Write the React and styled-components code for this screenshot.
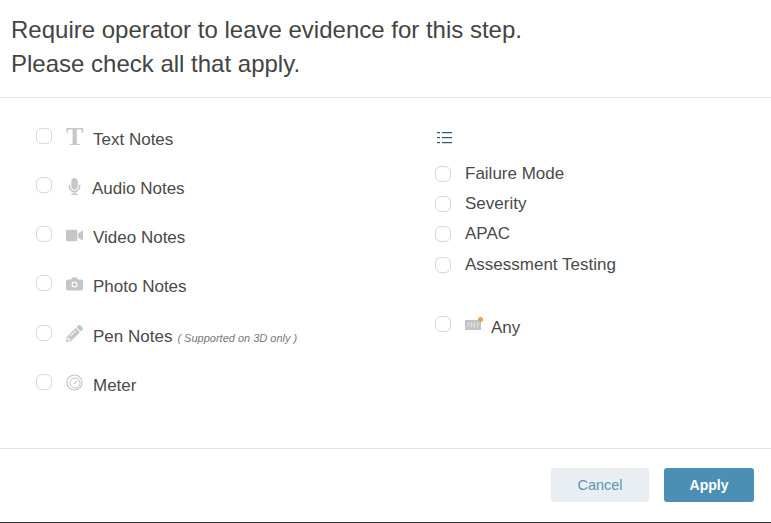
import React from "react";
import styled, { createGlobalStyle } from "styled-components";
import { FaMicrophone, FaVideo, FaPencilAlt } from "react-icons/fa";

const GlobalStyle = createGlobalStyle`
  html, body {
    margin: 0;
    padding: 0;
    background: #fff;
  }
  body {
    font-family: "Liberation Sans", Arial, sans-serif;
    color: #444;
  }
`;

function ListIcon() {
  return (
    <svg width="15" height="13" viewBox="0 0 15 13">
      <g fill="#2f5573">
        <rect x="0" y="1" width="3" height="1.2" />
        <rect x="5" y="1" width="10" height="1.2" />
        <rect x="0" y="6" width="3" height="1.2" />
        <rect x="5" y="6" width="10" height="1.2" />
        <rect x="0" y="11" width="3" height="1.2" />
        <rect x="5" y="11" width="10" height="1.2" />
      </g>
    </svg>
  );
}

function CameraIcon() {
  return (
    <svg width="17" height="14" viewBox="0 0 17 14">
      <path
        d="M2 2.500h3l1-2h5l1 2h3a2 2 0 0 1 2 2v7a2 2 0 0 1-2 2H2a2 2 0 0 1-2-2v-7a2 2 0 0 1 2-2z"
        fill="#c6c6c6"
      />
      <circle cx="8.500" cy="7.500" r="3" fill="#fff" />
      <circle cx="8.500" cy="7.500" r="1.800" fill="#c6c6c6" />
    </svg>
  );
}

function MeterIcon() {
  return (
    <svg width="17" height="17" viewBox="0 0 17 17" fill="none" stroke="#c4c4c4">
      <circle cx="8.5" cy="8.5" r="7.5" strokeWidth="1.2" />
      <circle cx="9" cy="9" r="5" strokeWidth="1" />
      <path d="M8 10l3-3" strokeWidth="1" stroke="#aaa" />
    </svg>
  );
}

function AnyIcon() {
  return (
    <svg width="18" height="14" viewBox="0 0 18 14">
      <rect x="0" y="3" width="16" height="10" fill="#c2c2c2" />
      <path d="M2 10.5l1-5h1l1 5M6.5 10.5v-5l3 5v-5M11 5.5l1.5 2.500 1.500-2.500M12.500 8v2.500" fill="none" stroke="#eee" strokeWidth="0.7" />
      <circle cx="15.500" cy="2.500" r="2.500" fill="#f0a040" />
    </svg>
  );
}

const rightItems = ["Failure Mode", "Severity", "APAC", "Assessment Testing"];

export default function App() {
  const leftItems = [
    { label: "Text Notes", icon: <SerifT>T</SerifT> },
    { label: "Audio Notes", icon: <FaMicrophone size={17} />, tight: true },
    { label: "Video Notes", icon: <FaVideo size={17} /> },
    { label: "Photo Notes", icon: <CameraIcon /> },
    { label: "Pen Notes", icon: <FaPencilAlt size={17} />, note: "( Supported on 3D only )" },
    { label: "Meter", icon: <MeterIcon /> },
  ];

  return (
    <Dialog>
      <GlobalStyle />
      <Header>
        Require operator to leave evidence for this step.
        <br />
        Please check all that apply.
      </Header>
      <Body>
        <LeftColumn>
          {leftItems.map((item) => (
            <EvidenceRow key={item.label}>
              <Checkbox />
              <IconSlot $tight={item.tight}>{item.icon}</IconSlot>
              <Label>{item.label}</Label>
              {item.note && <Note>{item.note}</Note>}
            </EvidenceRow>
          ))}
        </LeftColumn>
        <RightColumn>
          <ListHead>
            <ListIcon />
          </ListHead>
          {rightItems.map((label) => (
            <ListRow key={label}>
              <Checkbox />
              <Label>{label}</Label>
            </ListRow>
          ))}
          <AnyRow>
            <Checkbox />
            <AnySlot>
              <AnyIcon />
            </AnySlot>
            <Label>Any</Label>
          </AnyRow>
        </RightColumn>
      </Body>
      <Footer>
        <CancelButton>Cancel</CancelButton>
        <ApplyButton>Apply</ApplyButton>
      </Footer>
    </Dialog>
  );
}

const Dialog = styled.div`
  width: 771px;
  height: 523px;
  box-sizing: border-box;
  display: flex;
  flex-direction: column;
  border-bottom: 1px solid #333;
  background: #fff;
  overflow: hidden;
`;

const Header = styled.div`
  height: 98px;
  box-sizing: border-box;
  padding: 13px 11px 0;
  border-bottom: 1px solid #e5e5e5;
  font-size: 24px;
  line-height: 34px;
  color: #444;
`;

const Body = styled.div`
  flex: 1;
  display: flex;
  padding-top: 30px;
  padding-left: 36px;
`;

const LeftColumn = styled.div`
  width: 399px;
  display: flex;
  flex-direction: column;
  gap: 27.15px;
`;

const RightColumn = styled.div`
  display: flex;
  flex-direction: column;
`;

const EvidenceRow = styled.div`
  display: flex;
  align-items: flex-start;
  height: 22px;
`;

const Checkbox = styled.span`
  flex: none;
  width: 14px;
  height: 14px;
  border: 1px solid #d8d8d8;
  border-radius: 6px;
  background: #fff;
`;

const IconSlot = styled.span`
  flex: none;
  width: ${(p) => (p.$tight ? "26px" : "27px")};
  margin-left: 14px;
  height: 18px;
  display: flex;
  align-items: center;
  color: #c6c6c6;
`;

const SerifT = styled.span`
  font-family: "Liberation Serif", serif;
  font-weight: bold;
  font-size: 26px;
  line-height: 18px;
  color: #c6c6c6;
`;

const Label = styled.span`
  margin-top: 1px;
  font-size: 17px;
  line-height: 22px;
  color: #4a4a4a;
`;

const Note = styled.span`
  margin-left: 5px;
  margin-top: 6px;
  font-size: 11px;
  line-height: 14px;
  font-style: italic;
  color: #777;
`;

const ListHead = styled.div`
  height: 20px;
  padding-top: 2px;
  margin-bottom: 12px;
  margin-left: 2px;
`;

const ListRow = styled.div`
  display: flex;
  align-items: flex-start;
  gap: 14px;
  height: 22px;
  margin-bottom: 8.2px;
  padding-top: 4px;
  box-sizing: border-box;
  & > span:last-child {
    margin-top: -3px;
  }
`;

const AnyRow = styled.div`
  display: flex;
  align-items: flex-start;
  margin-top: 33.4px;
`;

const AnySlot = styled.span`
  flex: none;
  width: 26px;
  margin-left: 14px;
  margin-top: 1px;
`;

const Footer = styled.div`
  height: 74px;
  box-sizing: border-box;
  border-top: 1px solid #e5e5e5;
  display: flex;
  justify-content: flex-end;
  align-items: flex-start;
  gap: 15px;
  padding: 19px 17px 0 0;
`;

const CancelButton = styled.button`
  width: 98px;
  height: 34px;
  border: none;
  border-radius: 3px;
  background: #e9eef2;
  color: #5a95b8;
  font-family: "Liberation Sans", Arial, sans-serif;
  font-size: 14.5px;
`;

const ApplyButton = styled.button`
  width: 90px;
  height: 34px;
  border: none;
  border-radius: 3px;
  background: #4b8fb5;
  color: #fff;
  font-family: "Liberation Sans", Arial, sans-serif;
  font-size: 14px;
  font-weight: bold;
`;
